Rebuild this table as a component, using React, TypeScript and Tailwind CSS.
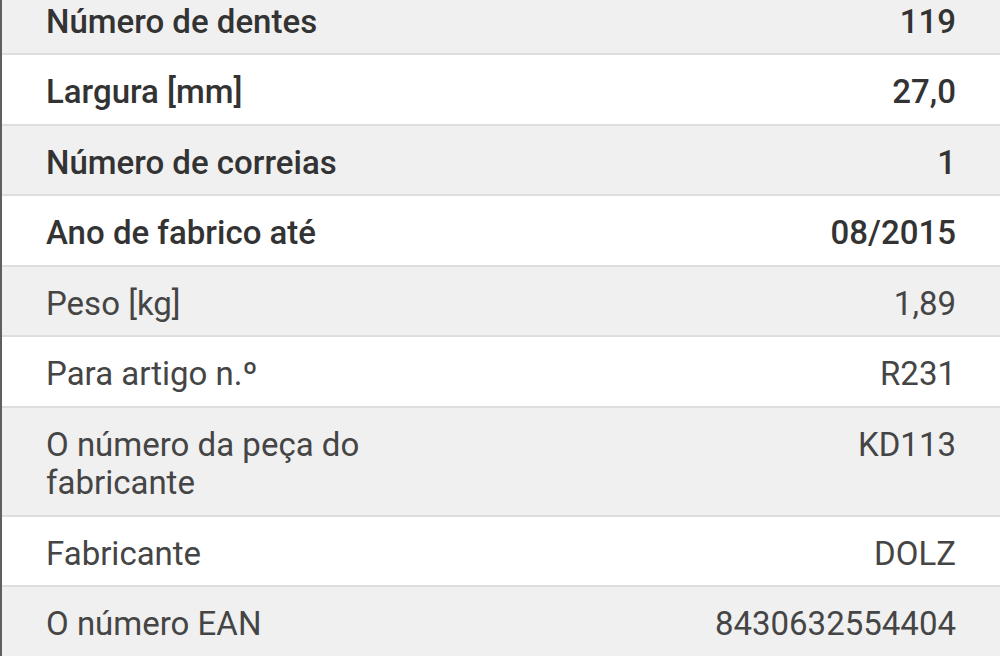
//
// Product specification table.
//

const rows = [
    { label: "Número de dentes", value: "119", strong: true },
    { label: "Largura [mm]", value: "27,0", strong: true },
    { label: "Número de correias", value: "1", strong: true },
    { label: "Ano de fabrico até", value: "08/2015", strong: true },
    { label: "Peso [kg]", value: "1,89" },
    { label: "Para artigo n.º", value: "R231" },
    { label: "O número da peça do fabricante", value: "KD113" },
    { label: "Fabricante", value: "DOLZ" },
    { label: "O número EAN", value: "8430632554404" },
];

export default function App () {
    return (
        <div className="w-[1000px] h-[656px] overflow-hidden bg-white font-['Roboto',sans-serif]">
            {/* tabela recortada no topo, como no ecrã */}
            <div className="-mt-[15.5px] border-l-2 border-[#5f5f5f]">
                {rows.map((r, i) => (
                    <div
                        key={r.label}
                        className={
                            "flex justify-between gap-8 pl-[44px] pr-[44px] pt-[18px] pb-[12px] border-b-2 border-[#dedede] text-[33px] leading-[38.5px] " +
                            (i % 2 === 0 ? "bg-[#f0f0f0]" : "bg-white") +
                            (r.strong ? " font-medium text-[#333333]" : " font-normal text-[#454545]")
                        }
                    >
                        <div className="max-w-[340px]">{r.label}</div>
                        <div className="text-right shrink-0">{r.value}</div>
                    </div>
                ))}
            </div>
        </div>
    );
}
